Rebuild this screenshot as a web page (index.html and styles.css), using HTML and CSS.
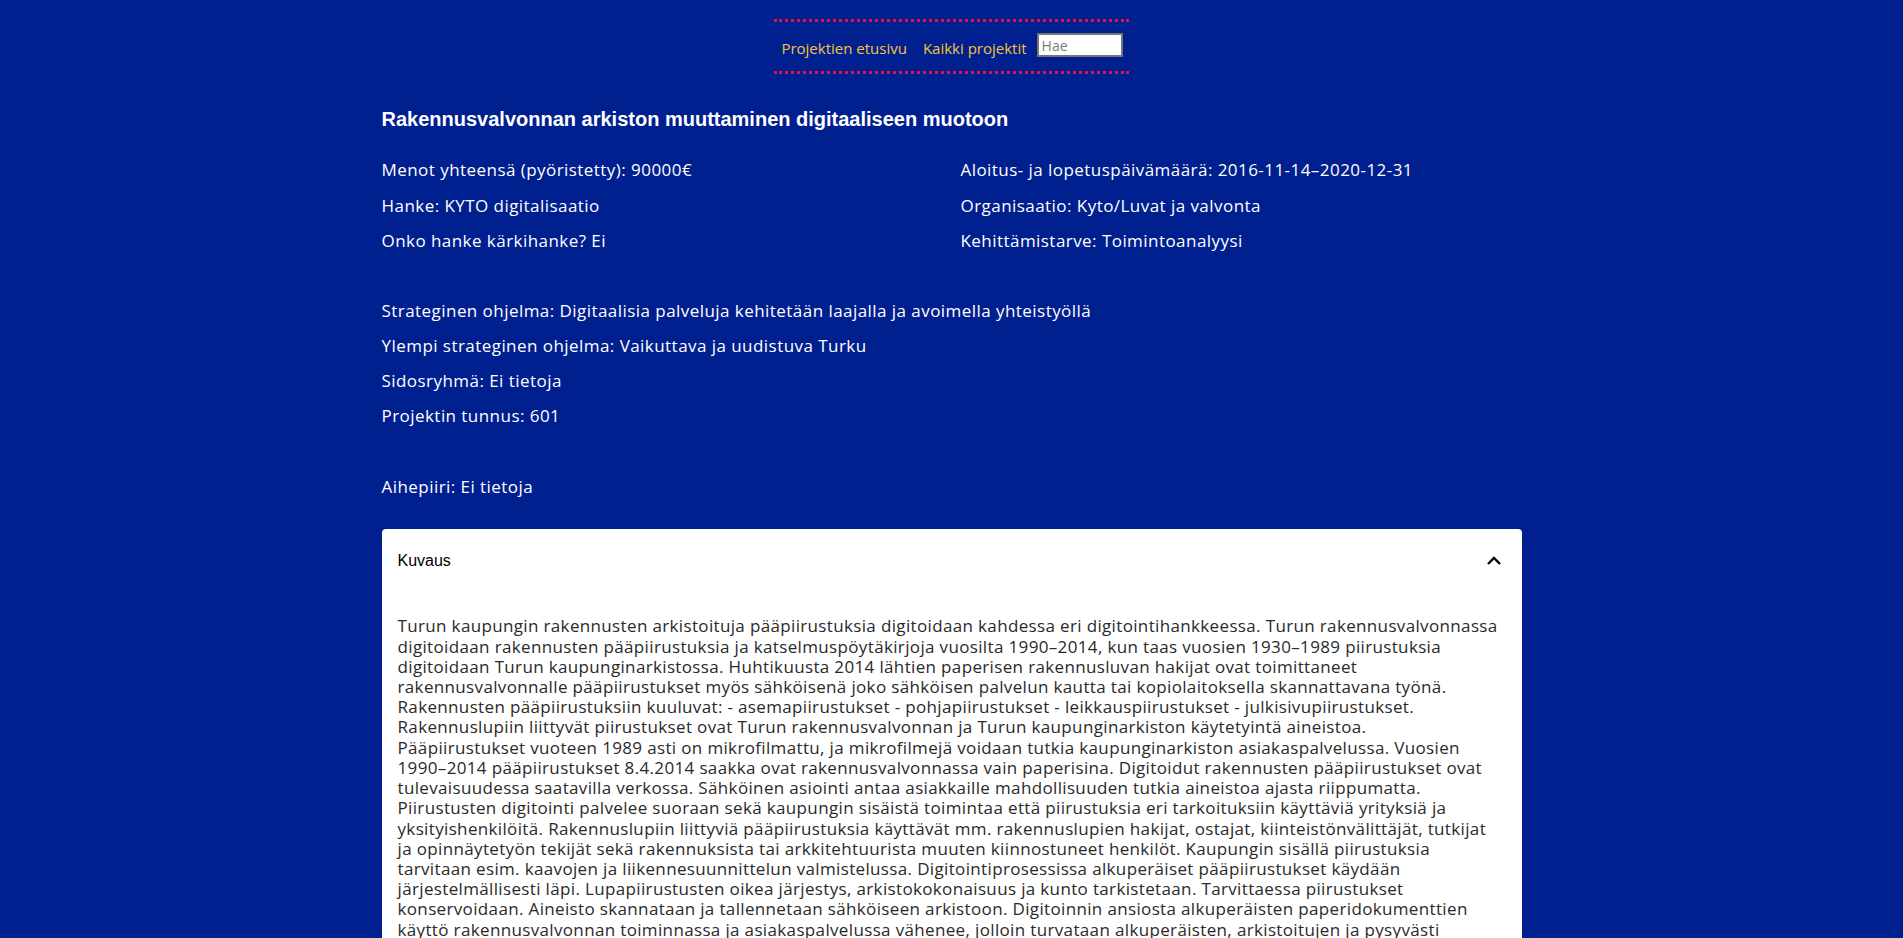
FILE: index.html
```html
<!DOCTYPE html>
<html lang="fi">
<head>
<meta charset="utf-8">
<title>Rakennusvalvonnan arkiston muuttaminen digitaaliseen muotoon</title>
<link rel="stylesheet" href="styles.css">
</head>
<body>
<header class="site-header">
  <nav class="nav">
    <a class="nav-link" href="#">Projektien etusivu</a>
    <a class="nav-link" href="#">Kaikki projektit</a>
    <input class="search" type="text" placeholder="Hae">
  </nav>
</header>
<main class="container">
  <h1 class="title">Rakennusvalvonnan arkiston muuttaminen digitaaliseen muotoon</h1>
  <div class="info-grid">
    <p class="info">Menot yhteensä (pyöristetty): 90000€</p>
    <p class="info">Aloitus- ja lopetuspäivämäärä: 2016-11-14–2020-12-31</p>
    <p class="info">Hanke: KYTO digitalisaatio</p>
    <p class="info">Organisaatio: Kyto/Luvat ja valvonta</p>
    <p class="info">Onko hanke kärkihanke? Ei</p>
    <p class="info">Kehittämistarve: Toimintoanalyysi</p>
  </div>
  <div class="info-list">
    <p class="info">Strateginen ohjelma: Digitaalisia palveluja kehitetään laajalla ja avoimella yhteistyöllä</p>
    <p class="info">Ylempi strateginen ohjelma: Vaikuttava ja uudistuva Turku</p>
    <p class="info">Sidosryhmä: Ei tietoja</p>
    <p class="info">Projektin tunnus: 601</p>
  </div>
  <p class="info topic">Aihepiiri: Ei tietoja</p>
  <section class="card">
    <div class="card-header">
      <span class="card-title">Kuvaus</span>
      <svg class="chevron" width="24" height="24" viewBox="0 0 24 24" aria-hidden="true"><path d="M6 15l6-6 6 6" fill="none" stroke="#000" stroke-width="2.4"/></svg>
    </div>
    <div class="card-body">
<p class="description">Turun kaupungin rakennusten arkistoituja pääpiirustuksia digitoidaan kahdessa eri digitointihankkeessa. Turun rakennusvalvonnassa
digitoidaan rakennusten pääpiirustuksia ja katselmuspöytäkirjoja vuosilta 1990–2014, kun taas vuosien 1930–1989 piirustuksia
digitoidaan Turun kaupunginarkistossa. Huhtikuusta 2014 lähtien paperisen rakennusluvan hakijat ovat toimittaneet
rakennusvalvonnalle pääpiirustukset myös sähköisenä joko sähköisen palvelun kautta tai kopiolaitoksella skannattavana työnä.
Rakennusten pääpiirustuksiin kuuluvat: - asemapiirustukset - pohjapiirustukset - leikkauspiirustukset - julkisivupiirustukset.
Rakennuslupiin liittyvät piirustukset ovat Turun rakennusvalvonnan ja Turun kaupunginarkiston käytetyintä aineistoa.
Pääpiirustukset vuoteen 1989 asti on mikrofilmattu, ja mikrofilmejä voidaan tutkia kaupunginarkiston asiakaspalvelussa. Vuosien
1990–2014 pääpiirustukset 8.4.2014 saakka ovat rakennusvalvonnassa vain paperisina. Digitoidut rakennusten pääpiirustukset ovat
tulevaisuudessa saatavilla verkossa. Sähköinen asiointi antaa asiakkaille mahdollisuuden tutkia aineistoa ajasta riippumatta.
Piirustusten digitointi palvelee suoraan sekä kaupungin sisäistä toimintaa että piirustuksia eri tarkoituksiin käyttäviä yrityksiä ja
yksityishenkilöitä. Rakennuslupiin liittyviä pääpiirustuksia käyttävät mm. rakennuslupien hakijat, ostajat, kiinteistönvälittäjät, tutkijat
ja opinnäytetyön tekijät sekä rakennuksista tai arkkitehtuurista muuten kiinnostuneet henkilöt. Kaupungin sisällä piirustuksia
tarvitaan esim. kaavojen ja liikennesuunnittelun valmistelussa. Digitointiprosessissa alkuperäiset pääpiirustukset käydään
järjestelmällisesti läpi. Lupapiirustusten oikea järjestys, arkistokokonaisuus ja kunto tarkistetaan. Tarvittaessa piirustukset
konservoidaan. Aineisto skannataan ja tallennetaan sähköiseen arkistoon. Digitoinnin ansiosta alkuperäisten paperidokumenttien
käyttö rakennusvalvonnan toiminnassa ja asiakaspalvelussa vähenee, jolloin turvataan alkuperäisten, arkistoitujen ja pysyvästi
säilytettävien asiakirjojen säilyminen.</p>
    </div>
  </section>
</main>
</body>
</html>
```

FILE: styles.css
```css
html, body {
  margin: 0;
  padding: 0;
}

body {
  background: #00208f;
  color: #ffffff;
  font-family: "Open Sans", "Noto Sans", sans-serif;
  font-size: 17px;
}

.site-header {
  display: flex;
  justify-content: center;
  padding-top: 19px;
}

.nav {
  display: flex;
  align-items: center;
  height: 49px;
  padding: 0 6px 0 7px;
  border-top: 3px dotted #e0114d;
  border-bottom: 3px dotted #e0114d;
}

.nav-link {
  color: #f9c23c;
  text-decoration: none;
  font-size: 15px;
  margin-right: 16px;
  margin-top: 2px;
}

.nav-link + .nav-link {
  margin-right: 10px;
}

.search {
  box-sizing: border-box;
  width: 86px;
  height: 24px;
  margin: 0 0 3px 0;
  padding: 1px 3px;
  border: 2px solid #767676;
  background: #fff;
  font-family: "Open Sans", sans-serif;
  font-size: 14px;
  color: #333;
}

.search::placeholder {
  color: #7a7a7a;
}

.container {
  width: 1140px;
  margin: 0 auto;
  padding-bottom: 40px;
}

.title {
  margin: 33px 0 0;
  font-family: "Liberation Sans", Arial, sans-serif;
  font-weight: bold;
  font-size: 20px;
  line-height: 24px;
}

.info {
  margin: 0;
  line-height: 19.5px;
  letter-spacing: 0.45px;
}

.info-grid {
  display: grid;
  grid-template-columns: 1fr 1fr;
  column-gap: 18px;
  row-gap: 16px;
  margin-top: 29px;
}

.info-list {
  display: flex;
  flex-direction: column;
  gap: 15.6px;
  margin-top: 50px;
}

.topic {
  margin-top: 51.5px;
}

.card {
  margin-top: 32.6px;
  background: #fff;
  border-radius: 4px;
  color: #222;
}

.card-header {
  display: flex;
  justify-content: space-between;
  align-items: center;
  padding: 20px 16px;
}

.card-title {
  font-family: "Liberation Sans", Arial, sans-serif;
  font-size: 16px;
  line-height: 24px;
  color: #000;
}

.chevron {
  display: block;
}

.card-body {
  padding: 23.6px 16px 16px;
}

.description {
  margin: 0;
  white-space: pre-line;
  line-height: 20.2px;
  letter-spacing: 0.35px;
  color: #2a2a2a;
}
```
